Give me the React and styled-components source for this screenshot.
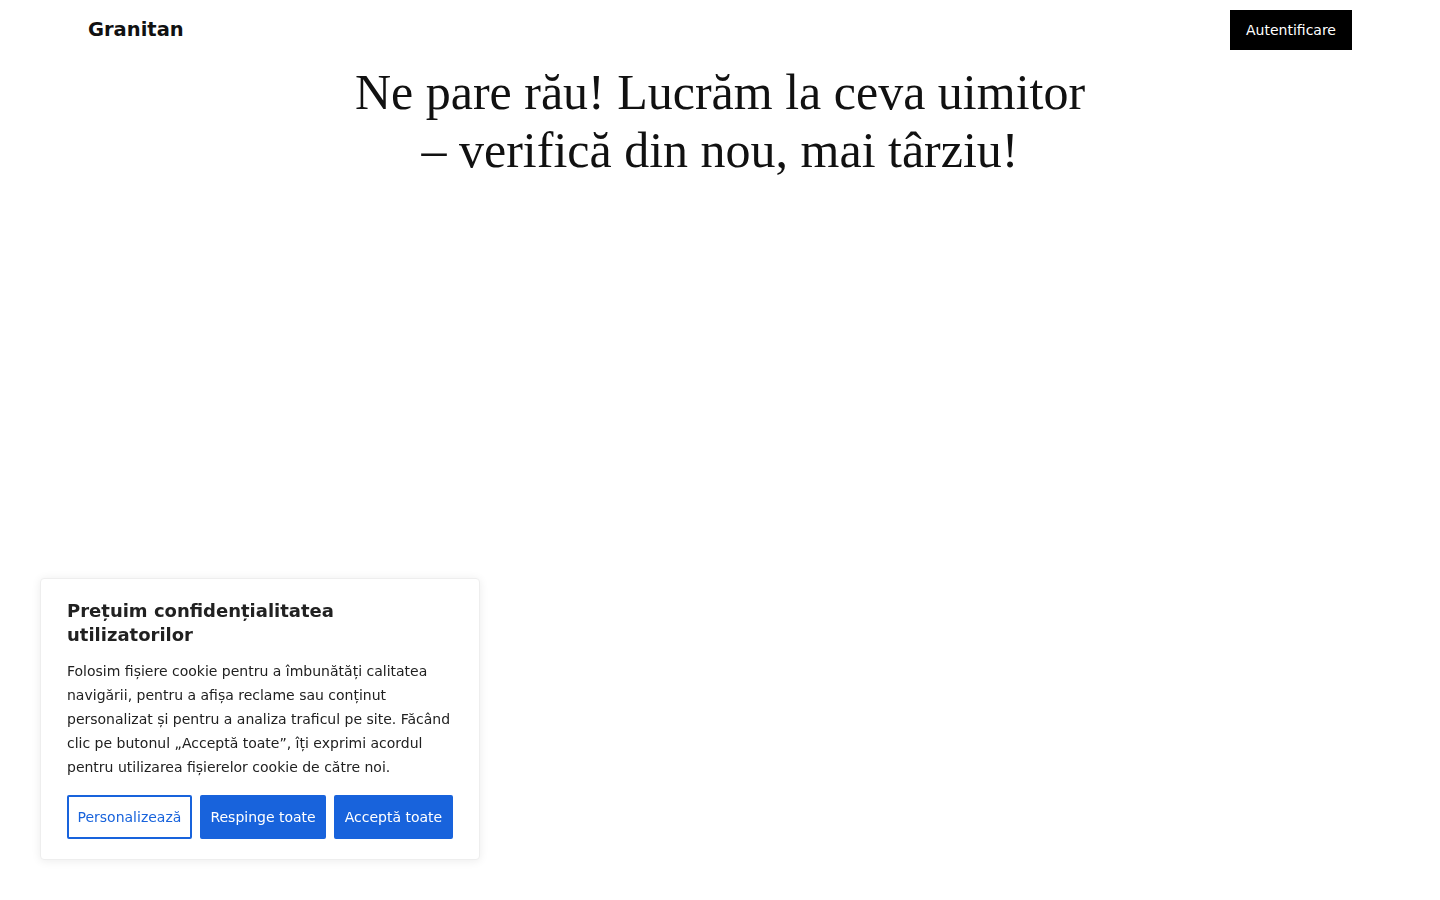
import React from "react";
import styled, { createGlobalStyle } from "styled-components";

const Global = createGlobalStyle`
  html, body { margin: 0; padding: 0; background: #fff; }
  body { font-family: "DejaVu Sans", sans-serif; color: #111; }
`;

const Header = styled.header`
  display: flex;
  align-items: center;
  justify-content: space-between;
  height: 60px;
  padding: 0 88px;
  box-sizing: border-box;
`;

const Brand = styled.div`
  font-family: "DejaVu Sans", sans-serif;
  font-weight: 700;
  font-size: 19.5px;
  color: #111;
  margin-top: -1px;
`;

const LoginButton = styled.button`
  background: #000;
  color: #fff;
  border: none;
  height: 40px;
  width: 122px;
  font-family: "DejaVu Sans", sans-serif;
  font-size: 14px;
  padding: 0;
  cursor: pointer;
`;

const Hero = styled.main`
  display: flex;
  justify-content: center;
  padding-top: 3px;
`;

const Title = styled.h1`
  margin: 0;
  font-family: "Liberation Serif", "DejaVu Serif", serif;
  font-weight: 400;
  font-size: 50px;
  line-height: 58px;
  text-align: center;
  color: #111;
`;

const Consent = styled.section`
  position: fixed;
  left: 40px;
  bottom: 40px;
  width: 440px;
  box-sizing: border-box;
  padding: 20px 26px 20px;
  background: #fff;
  border: 1px solid #eee;
  border-radius: 4px;
  box-shadow: 0 1px 10px rgba(0, 0, 0, 0.08);
`;

const ConsentTitle = styled.h2`
  margin: 0 0 12px;
  font-family: "DejaVu Sans", sans-serif;
  font-weight: 700;
  font-size: 18px;
  line-height: 24px;
  color: #212121;
`;

const ConsentText = styled.p`
  margin: 0 0 16px;
  font-family: "DejaVu Sans", sans-serif;
  font-size: 14px;
  line-height: 24px;
  color: #212121;
`;

const Actions = styled.div`
  display: flex;
  gap: 8px;
`;

const ActionButton = styled.button`
  height: 44px;
  padding: 0 8.5px;
  box-sizing: border-box;
  white-space: nowrap;
  border-radius: 2px;
  border: 2px solid #1863dc;
  background: ${(p) => (p.$outline ? "#fff" : "#1863dc")};
  color: ${(p) => (p.$outline ? "#1863dc" : "#fff")};
  font-family: "DejaVu Sans", sans-serif;
  font-size: 14px;
  cursor: pointer;
`;

export default function App() {
  return (
    <>
      <Global />
      <Header>
        <Brand>Granitan</Brand>
        <LoginButton>Autentificare</LoginButton>
      </Header>
      <Hero>
        <Title>
          Ne pare rău! Lucrăm la ceva uimitor
          <br />– verifică din nou, mai târziu!
        </Title>
      </Hero>
      <Consent>
        <ConsentTitle>Prețuim confidențialitatea utilizatorilor</ConsentTitle>
        <ConsentText>
          Folosim fișiere cookie pentru a îmbunătăți calitatea navigării, pentru a afișa
          reclame sau conținut personalizat și pentru a analiza traficul pe site. Făcând
          clic pe butonul „Acceptă toate”, îți exprimi acordul pentru utilizarea
          fișierelor cookie de către noi.
        </ConsentText>
        <Actions>
          <ActionButton $outline>Personalizează</ActionButton>
          <ActionButton>Respinge toate</ActionButton>
          <ActionButton>Acceptă toate</ActionButton>
        </Actions>
      </Consent>
    </>
  );
}
